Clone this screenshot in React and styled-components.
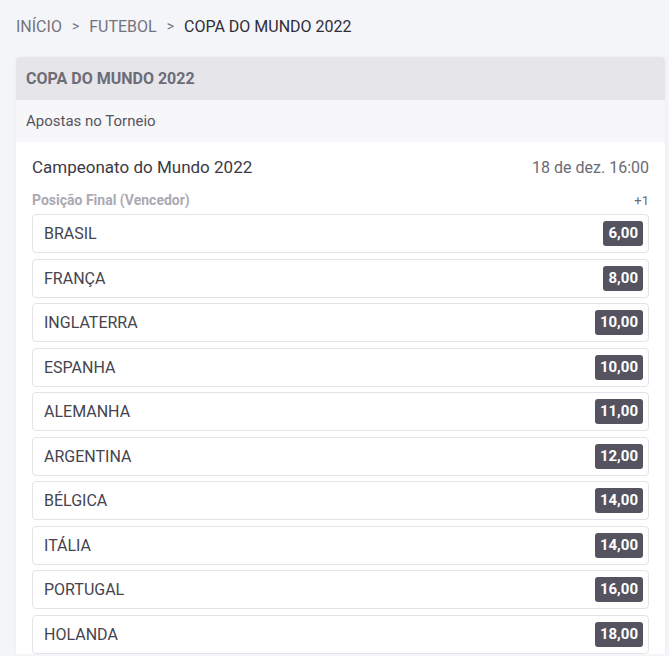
import React from "react";
import styled, { createGlobalStyle } from "styled-components";

const Global = createGlobalStyle`
  html, body { margin: 0; padding: 0; background: #f4f5f8; }
  body { font-family: Roboto, "Noto Sans", sans-serif; -webkit-font-smoothing: antialiased; }
`;

const Page = styled.div`
  padding: 15px 4px 0 16px;
  width: 649px;
`;

const Breadcrumb = styled.nav`
  display: flex;
  align-items: center;
  gap: 10px;
  height: 22px;
  font-size: 16px;
  color: #74737d;
  margin-bottom: 20px;
`;

const Crumb = styled.span`
  color: ${(p) => (p.$current ? "#2f2e38" : "#74737d")};
`;

const Sep = styled.span`
  color: #74737d;
  font-size: 14px;
`;

const Card = styled.section`
  background: #fff;
  border-radius: 4px 4px 0 0;
  box-shadow: 0 0 3px rgba(0, 0, 0, 0.06);
  overflow: hidden;
`;

const CardHeader = styled.header`
  height: 43px;
  display: flex;
  align-items: center;
  padding: 0 10px;
  background: #e5e5ea;
  font-weight: 700;
  font-size: 16px;
  color: #6d6c76;
`;

const SubHeader = styled.div`
  height: 42px;
  display: flex;
  align-items: center;
  padding: 0 10px;
  background: #f7f7f9;
  font-size: 15px;
  color: #55545e;
`;

const Body = styled.div`
  padding: 12px 16px 0 16px;
`;

const EventRow = styled.div`
  display: flex;
  justify-content: space-between;
  align-items: center;
  height: 26px;
`;

const EventName = styled.span`
  font-size: 17px;
  color: #3b3a44;
`;

const EventDate = styled.span`
  font-size: 16px;
  color: #6b6a74;
`;

const MarketRow = styled.div`
  display: flex;
  justify-content: space-between;
  align-items: center;
  height: 22px;
  margin-top: 9px;
  margin-bottom: 3px;
`;

const MarketName = styled.span`
  font-size: 14px;
  font-weight: 700;
  color: #abaab2;
`;

const MarketCount = styled.span`
  font-size: 13px;
  color: #6b6a74;
`;

const List = styled.div`
  display: flex;
  flex-direction: column;
  gap: 5.5px;
`;

const Selection = styled.div`
  display: flex;
  justify-content: space-between;
  align-items: center;
  height: 39px;
  box-sizing: border-box;
  padding: 0 5px 0 11px;
  background: #fff;
  border: 1px solid #e3e3e8;
  border-radius: 4px;
  cursor: pointer;
`;

const Team = styled.span`
  font-size: 16px;
  color: #45444e;
`;

const Odd = styled.span`
  background: #55535f;
  color: #fff;
  font-weight: 700;
  font-size: 15px;
  border-radius: 3px;
  padding: 0 5px;
  height: 25px;
  line-height: 25px;
`;

const teams = [
  ["BRASIL", "6,00"],
  ["FRANÇA", "8,00"],
  ["INGLATERRA", "10,00"],
  ["ESPANHA", "10,00"],
  ["ALEMANHA", "11,00"],
  ["ARGENTINA", "12,00"],
  ["BÉLGICA", "14,00"],
  ["ITÁLIA", "14,00"],
  ["PORTUGAL", "16,00"],
  ["HOLANDA", "18,00"],
];

export default function App() {
  return (
    <>
      <Global />
      <Page>
        <Breadcrumb>
          <Crumb>INÍCIO</Crumb>
          <Sep>&gt;</Sep>
          <Crumb>FUTEBOL</Crumb>
          <Sep>&gt;</Sep>
          <Crumb $current>COPA DO MUNDO 2022</Crumb>
        </Breadcrumb>
        <Card>
          <CardHeader>COPA DO MUNDO 2022</CardHeader>
          <SubHeader>Apostas no Torneio</SubHeader>
          <Body>
            <EventRow>
              <EventName>Campeonato do Mundo 2022</EventName>
              <EventDate>18 de dez. 16:00</EventDate>
            </EventRow>
            <MarketRow>
              <MarketName>Posição Final (Vencedor)</MarketName>
              <MarketCount>+1</MarketCount>
            </MarketRow>
            <List>
              {teams.map(([t, o]) => (
                <Selection key={t}>
                  <Team>{t}</Team>
                  <Odd>{o}</Odd>
                </Selection>
              ))}
            </List>
          </Body>
        </Card>
      </Page>
    </>
  );
}
